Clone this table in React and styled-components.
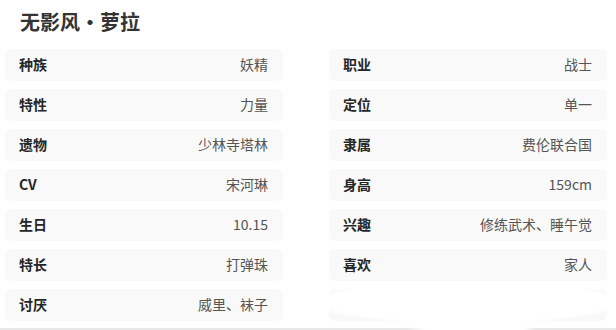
import styled, { createGlobalStyle } from "styled-components"

const GlobalStyle = createGlobalStyle`
body {
    margin: 0;
    background: #fff;
    font-family: "Noto Sans CJK SC", "Noto Sans", sans-serif;
}
`

const profile = [
    ["种族", "妖精"],
    ["职业", "战士"],
    ["特性", "力量"],
    ["定位", "单一"],
    ["遗物", "少林寺塔林"],
    ["隶属", "费伦联合国"],
    ["CV", "宋河琳"],
    ["身高", "159cm"],
    ["生日", "10.15"],
    ["兴趣", "修练武术、睡午觉"],
    ["特长", "打弹珠"],
    ["喜欢", "家人"],
    ["讨厌", "威里、袜子"],
]

function App() {
    return (
        <MainLayout>
            <GlobalStyle />
            <Title>无影风・萝拉</Title>
            <InfoGrid>
                {profile.map(([label, value]) => (
                    <InfoCell key={label}>
                        <Label>{label}</Label>
                        <Value>{value}</Value>
                    </InfoCell>
                ))}
                <InfoCell $faded />
            </InfoGrid>
            <BottomLine />
        </MainLayout>
    )
}

export default App

const MainLayout = styled.div`
width: 616px;
height: 330px;
overflow: hidden;
display: flex;
flex-direction: column;
`

const Title = styled.div`
color: #333;
font-size: 20px;
font-weight: 700;
line-height: 28px;
padding: 8px 0 0 20px;
height: 40px;
box-sizing: border-box;
`

const InfoGrid = styled.div`
display: grid;
grid-template-columns: 278px 278px;
column-gap: 46px;
row-gap: 8px;
padding: 9px 0 0 5px;
`

const InfoCell = styled.div`
display: flex;
justify-content: space-between;
align-items: center;
height: 32px;
box-sizing: border-box;
padding: 0 15px 2px 14px;
border-radius: 6px;
background: ${p => p.$faded
        ? "radial-gradient(ellipse 58% 72% at 50% 40%, #fff 86%, #f8f8f8 100%)"
        : "#f9f9f9"};
`

const Label = styled.span`
color: #262626;
font-size: 14px;
font-weight: 700;
line-height: 14px;
`

const Value = styled.span`
color: #555;
font-size: 14px;
line-height: 14px;
`

const BottomLine = styled.div`
margin-top: 7px;
height: 2px;
background: linear-gradient(90deg, #e8e8e8 0%, #e8e8e8 66%, #fff 69%, #fff 85%, #e8e8e8 87%, #e8e8e8 100%);
`
